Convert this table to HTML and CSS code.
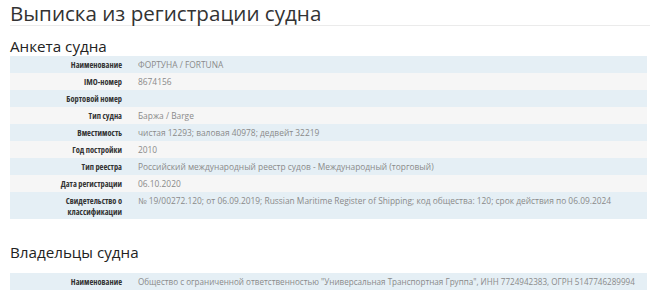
FILE: index.html
```html
<!DOCTYPE html>
<html lang="ru">
<head>
<meta charset="utf-8">
<title>Выписка из регистрации судна</title>
<link rel="stylesheet" href="styles.css">
</head>
<body>
<h1 class="page-title">Выписка из регистрации судна</h1>

<h2 class="section-title">Анкета судна</h2>
<table class="info">
  <tr><th>Наименование</th><td>ФОРТУНА / FORTUNA</td></tr>
  <tr><th>IMO-номер</th><td>8674156</td></tr>
  <tr><th>Бортовой номер</th><td></td></tr>
  <tr><th>Тип судна</th><td>Баржа / Barge</td></tr>
  <tr><th>Вместимость</th><td>чистая 12293; валовая 40978; дедвейт 32219</td></tr>
  <tr><th>Год постройки</th><td>2010</td></tr>
  <tr><th>Тип реестра</th><td>Российский международный реестр судов - Международный (торговый)</td></tr>
  <tr><th>Дата регистрации</th><td>06.10.2020</td></tr>
  <tr><th>Свидетельство о классификации</th><td>№ 19/00272.120; от 06.09.2019; Russian Maritime Register of Shipping; код общества: 120; срок действия по 06.09.2024</td></tr>
</table>

<h2 class="section-title section-title--spaced">Владельцы судна</h2>
<table class="info info--owners">
  <tr><th>Наименование</th><td>Общество с ограниченной ответственностью "Универсальная Транспортная Группа", ИНН 7724942383, ОГРН 5147746289994</td></tr>
</table>
</body>
</html>
```

FILE: styles.css
```css
html, body {
  margin: 0;
  background: #fff;
}
body {
  padding: 0 3px 0 10px;
  font-family: "Open Sans", "Liberation Sans", sans-serif;
  color: #333;
}
.page-title {
  margin: 0 -3px 0 0;
  padding-top: 1px;
  font-size: 20.6px;
  line-height: 24px;
  font-weight: 400;
  color: #333;
  border-bottom: 1px solid #ebebeb;
}
.section-title {
  margin: 11px 0 1px;
  font-size: 15.2px;
  line-height: 18px;
  font-weight: 400;
  color: #222;
}
.section-title--spaced {
  margin-top: 24px;
  margin-bottom: 12px;
}
.info {
  width: 100%;
  border-collapse: collapse;
  font-size: 8.4px;
  line-height: 11px;
}
.info tr:nth-child(odd) {
  background: #e5eff5;
}
.info tr:nth-child(even) {
  background: #f6f6f6;
}
.info th,
.info td {
  height: 17px;
  box-sizing: border-box;
  padding: 3px 0 2px;
  vertical-align: top;
}
.info th {
  width: 118px;
  padding-right: 6px;
  text-align: right;
  font-weight: 700;
  font-size: 8.4px;
  font-stretch: 75%;
  color: #333;
}
.info td {
  padding-left: 10px;
  text-align: left;
  color: #8a8a8a;
}
.info--owners td {
  font-size: 8.1px;
  white-space: nowrap;
}
```
